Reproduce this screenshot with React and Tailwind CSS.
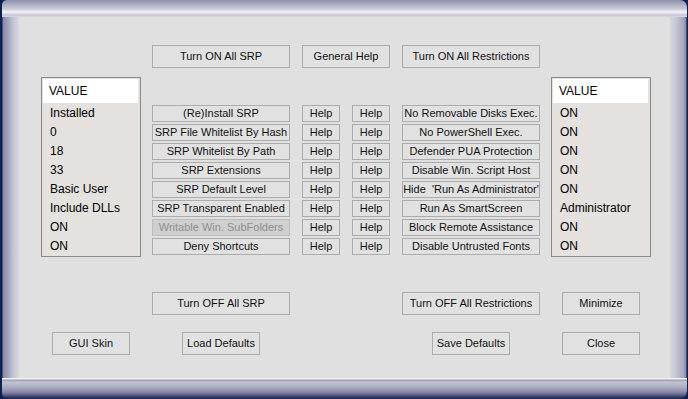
import React from 'react';

const Btn = ({ children, className = '', disabled = false }) => (
  <div
    className={
      'flex items-center justify-center border whitespace-pre text-[11px] leading-none ' +
      (disabled
        ? 'bg-[#cfcfcf] border-[#bdbdbd] text-[#8e8e8e] '
        : 'bg-[#e1e1e1] border-[#acacac] text-[#111] ') +
      className
    }
  >
    {children}
  </div>
);

const ListBox = ({ values, className = '' }) => (
  <div className={'w-[100px] h-[180px] border border-[#8a8a8a] bg-[#e4e1de] p-[1px] flex flex-col text-[12px] text-black ' + className}>
    <div className="h-[24px] bg-white mr-[1px] flex items-center pl-[6px]">VALUE</div>
    {values.map((v, i) => (
      <div key={i} className="h-[19px] flex items-center pl-[7px] whitespace-nowrap">
        {v}
      </div>
    ))}
  </div>
);

const App = () => {
  const srp = [
    '(Re)Install SRP',
    'SRP File Whitelist By Hash',
    'SRP Whitelist By Path',
    'SRP Extensions',
    'SRP Default Level',
    'SRP Transparent Enabled',
    'Writable Win. SubFolders',
    'Deny Shortcuts'
  ];
  const restrictions = [
    'No Removable Disks Exec.',
    'No PowerShell Exec.',
    'Defender PUA Protection',
    'Disable Win. Script Host',
    "Hide  'Run As Administrator'",
    'Run As SmartScreen',
    'Block Remote Assistance',
    'Disable Untrusted Fonts'
  ];
  const leftValues = ['Installed', '0', '18', '33', 'Basic User', 'Include DLLs', 'ON', 'ON'];
  const rightValues = ['ON', 'ON', 'ON', 'ON', 'ON', 'Administrator', 'ON', 'ON'];

  return (
    <div className="w-[688px] h-[399px] bg-[#0b2150] flex flex-col overflow-hidden font-['Liberation_Sans',Arial,sans-serif]">
      {/* title bar */}
      <div className="h-[17px] shrink-0 ml-[2px] mr-[1px] rounded-tl-[5px] rounded-tr-[7px] bg-[linear-gradient(to_bottom,#8d91ab_0px,#a9acc2_4px,#c9cbd8_9px,#f3f3f7_12px,#e6e6ee_13px,#c6c7d4_15px,#d9d9e2_17px)]" />

      <div className="flex flex-1 min-h-0">
        {/* left frame */}
        <div className="w-[19px] shrink-0 bg-[linear-gradient(to_right,#0b2150_0px,#0b2150_2px,#8988a8_3px,#a3a3bc_8px,#c3c3d2_13px,#dadae2_19px)]" />

        {/* content */}
        <div className="w-[651px] shrink-0 bg-[#e0e0e0] flex flex-col pt-[28px]">
          <div className="flex pl-[133px] gap-[12px]">
            <Btn className="w-[138px] h-[23px]">Turn ON All SRP</Btn>
            <Btn className="w-[88px] h-[23px]">General Help</Btn>
            <Btn className="w-[138px] h-[23px]">Turn ON All Restrictions</Btn>
          </div>

          <div className="flex items-start mt-[9px] pl-[22px]">
            <ListBox values={leftValues} />
            <div className="ml-[11px] mt-[28px] flex flex-col gap-[2px]">
              {srp.map((s, i) => (
                <div key={i} className="flex gap-[12px]">
                  <Btn className="w-[138px] h-[17px]" disabled={i === 6}>{s}</Btn>
                  <Btn className="w-[38px] h-[17px]">Help</Btn>
                  <Btn className="w-[38px] h-[17px]">Help</Btn>
                  <Btn className="w-[138px] h-[17px]">{restrictions[i]}</Btn>
                </div>
              ))}
            </div>
            <ListBox values={rightValues} className="ml-[11px]" />
          </div>

          <div className="flex mt-[35px] pl-[133px]">
            <Btn className="w-[138px] h-[23px]">Turn OFF All SRP</Btn>
            <Btn className="w-[138px] h-[23px] ml-[112px]">Turn OFF All Restrictions</Btn>
            <Btn className="w-[78px] h-[23px] ml-[22px]">Minimize</Btn>
          </div>

          <div className="flex mt-[17px] pl-[33px]">
            <Btn className="w-[78px] h-[23px]">GUI Skin</Btn>
            <Btn className="w-[78px] h-[23px] ml-[52px]">Load Defaults</Btn>
            <Btn className="w-[78px] h-[23px] ml-[172px]">Save Defaults</Btn>
            <Btn className="w-[78px] h-[23px] ml-[52px]">Close</Btn>
          </div>
        </div>

        {/* right frame */}
        <div className="flex-1 bg-[linear-gradient(to_right,#d6d6de_0px,#cdcdd8_4px,#b9b9cc_9px,#a3a3bb_14px,#7f7fa0_16px,#0b2150_17px)]" />
      </div>

      {/* bottom bar */}
      <div className="h-[21px] shrink-0 ml-[2px] mr-[1px] rounded-bl-[6px] rounded-br-[8px] bg-[linear-gradient(to_bottom,#f4f4f4_0px,#f4f4f4_1px,#9a9aae_2px,#c3c3d3_4px,#acacc2_9px,#8a8aa8_14px,#5e5e86_17px,#3a3a66_19px,#1a2a58_21px)]" />
    </div>
  );
};

export default App;
